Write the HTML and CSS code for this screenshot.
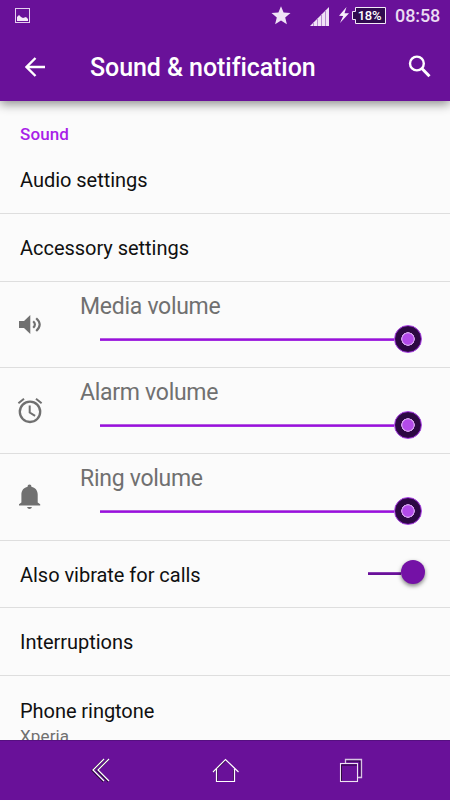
FILE: index.html
```html
<!DOCTYPE html>
<html lang="en">
<head>
<meta charset="utf-8">
<title>Sound &amp; notification</title>
<link rel="stylesheet" href="styles.css">
</head>
<body>
<div class="screen">
  <header class="top">
    <div class="status">
      <svg class="st-pic" width="15" height="15" viewBox="0 0 15 15"><rect x=".5" y=".5" width="14" height="14" fill="none" stroke="#e4d0ee"/><path d="M2 13V9l2-2 2 2 2 1 3-1 2 2v2z" fill="#f4e9f8"/></svg>
      <svg class="st-star" width="20" height="19" viewBox="0 0 20 19"><path d="M10 .2l2.6 6.3 6.9.5-5.3 4.4 1.7 6.8-5.9-3.7-5.9 3.7 1.7-6.8L.5 7l6.9-.5z" fill="#f0e3f6"/></svg>
      <svg class="st-signal" width="19" height="19" viewBox="0 0 19 19"><path d="M0 19L19 0v19z" fill="#f0e3f6"/><path d="M3.5 15v4M7.5 11v8M11.5 7v12M15.5 3v16" stroke="#b78bd0" stroke-width="1"/></svg>
      <svg class="st-bolt" width="10" height="16" viewBox="0 0 10 16"><path d="M7.5 0L0 8.7l4.2.3L1 16l9-9.7-4.5-.1z" fill="#f8effc"/></svg>
      <div class="battery"><svg width="34" height="17" viewBox="0 0 34 17"><path d="M3.5.5h30v16h-30v-4h-3v-8h3z" fill="#310b50" stroke="#f4e9f8"/></svg><span>18%</span></div>
      <span class="clock">08:58</span>
    </div>
    <div class="bar">
      <svg class="back" width="21" height="20" viewBox="0 0 21 20"><path d="M20 10H2M10.5 1L1.5 10l9 9" fill="none" stroke="#fff" stroke-width="2.4"/></svg>
      <h1>Sound &amp; notification</h1>
      <svg class="search" width="23" height="23" viewBox="0 0 23 23"><circle cx="8.9" cy="8.5" r="6.9" fill="none" stroke="#fff" stroke-width="2.4"/><path d="M13.9 13.5l7.6 7.8" stroke="#fff" stroke-width="3"/></svg>
    </div>
  </header>
  <main>
    <h2>Sound</h2>
    <div class="row audio"><span>Audio settings</span></div>
    <div class="row"><span>Accessory settings</span></div>
    <div class="volume">
      <svg class="icon" width="30" height="30" viewBox="0 0 30 30"><path d="M4 11h5l6.3-6v19L9 18H4z" fill="#707070"/><path d="M18.2 11.3q3.4 3.2 0 6.5M21.2 8.2q7 6.4 0 12.8" fill="none" stroke="#707070" stroke-width="2.2"/></svg>
      <div class="control"><label>Media volume</label><div class="slider"><i class="track"></i><i class="thumb"></i></div></div>
    </div>
    <div class="volume">
      <svg class="icon" width="30" height="30" viewBox="0 0 30 30"><circle cx="15" cy="15.8" r="10.2" fill="none" stroke="#707070" stroke-width="2.3"/><path d="M14.7 9.5v7l5.4 3.4M3.4 7.2L9 2.7M21 2.7l5.6 4.5" fill="none" stroke="#707070" stroke-width="2"/></svg>
      <div class="control"><label>Alarm volume</label><div class="slider"><i class="track"></i><i class="thumb"></i></div></div>
    </div>
    <div class="volume tall">
      <svg class="icon" width="30" height="30" viewBox="0 0 30 30"><path d="M14.5 2.4c1.2 0 1.9.9 1.9 2.3 3.8.8 6.3 3.6 6.3 7.8v8l2.5 1.7v1.4H4v-1.4l2.4-1.7v-8c0-4.2 2.5-7 6.2-7.8 0-1.4.7-2.3 1.9-2.3zM12 25h5q-.6 2-2.5 2T12 25z" fill="#707070"/></svg>
      <div class="control"><label>Ring volume</label><div class="slider"><i class="track"></i><i class="thumb"></i></div></div>
    </div>
    <div class="row toggle-row"><span>Also vibrate for calls</span><div class="toggle"><i class="rail"></i><i class="knob"></i></div></div>
    <div class="row interruptions"><span>Interruptions</span></div>
    <div class="ringtone"><p>Phone ringtone</p><small>Xperia</small></div>
  </main>
  <nav>
    <svg width="20" height="25" viewBox="0 0 20 25"><g fill="none"><path d="M12.5 1.5L1.5 12.5l11 11M17.5 1.5L6.5 12.5l11 11" stroke="#240334" stroke-width="2"/><path d="M13 1L2 12l11 11M18 1L7 12l11 11" stroke="#fff" stroke-width="1.3"/></g></svg>
    <svg class="home" width="28" height="25" viewBox="0 0 28 25"><g fill="none"><path d="M5 12v12M2 13.5L14 2M22 12v10.5" stroke="#240334" stroke-width="1.5"/><path d="M1 14L13.5 1.5 26.5 14M4.5 11v12.5h18V11" stroke="#fff" stroke-width="1.2"/></g></svg>
    <svg width="24" height="25" viewBox="0 0 24 25"><g fill="none"><path d="M2.5 23V7H18M7 3h14v15" stroke="#240334"/><path d="M6.5 6V1.5h16v18H19" stroke="#d8c5e1" stroke-width="1.3"/><rect x="1.5" y="5.5" width="17" height="18" stroke="#eee4f2" stroke-width="1.1"/></g></svg>
  </nav>
</div>
</body>
</html>
```
FILE: styles.css
```css
* { box-sizing: border-box; }
body { margin: 0; font-family: Roboto, "Liberation Sans", sans-serif; }
.screen { width: 450px; height: 800px; display: flex; flex-direction: column; overflow: hidden; background: #fbfbfb; }
.top { position: relative; z-index: 1; flex: none; height: 101px; background: #691199; box-shadow: 0 3px 10px rgba(0,0,0,.45); color: #fff; }
.status { display: flex; height: 32px; padding-left: 15px; align-items: flex-start; }
.st-pic { margin-top: 8px; }
.st-star { margin: 6px 0 0 240.5px; }
.st-signal { margin: 7px 0 0 19px; }
.st-bolt { margin: 7px 0 0 10px; }
.battery { position: relative; width: 34px; height: 17px; margin: 7px 0 0 3px; }
.battery svg { display: block; }
.battery span { position: absolute; left: 5px; top: 1px; width: 26px; font-size: 13px; line-height: 15px; letter-spacing: -.3px; text-align: center; white-space: nowrap; font-weight: 500; }
.clock { margin: 5px 0 0 9.5px; font-size: 18px; line-height: 22px; letter-spacing: -.1px; font-weight: 500; color: #eadcf2; }
.bar { display: flex; align-items: center; height: 69px; padding: 0 19px 0 25px; }
h1 { flex: 1; margin: 2px 0 0 44px; font-size: 25px; line-height: 32px; letter-spacing: -.07px; font-weight: 500; white-space: nowrap; }
.search { flex: none; }
main { flex: 1; min-height: 0; overflow: hidden; color: #101010; }
h2 { margin: 0; height: 45px; padding: 22px 20px 0; font-size: 17px; line-height: 22px; letter-spacing: .1px; font-weight: 500; color: #a91fe8; }
.row { display: flex; align-items: center; height: 68px; padding: 0 20px; border-bottom: 1px solid #dedede; font-size: 20px; line-height: 26px; letter-spacing: -.03px; }
.volume { display: flex; height: 86px; border-bottom: 1px solid #dedede; }
.tall { height: 87px; }
.icon { flex: none; margin: 28px 0 0 15px; }
.control { margin-left: 35px; width: 350px; }
label { display: block; margin-top: 10px; font-size: 23px; line-height: 30px; letter-spacing: -.28px; color: #707070; }
.slider { display: flex; align-items: center; height: 28px; margin: 3px 0 0 20px; }
.track { width: 294px; height: 3px; margin-top: 1px; background: linear-gradient(#b35be0 0 1px, #9b0fdd 1px 2px, #a22de0 2px); }
.thumb { width: 28px; height: 28px; border: 1px solid #a63ee0; border-radius: 50%; background: radial-gradient(circle, #b34ae9 0 5.2px, #d4a0ed 6px 6.5px, #2c0842 7px 11.5px, #3c095a 13px); }
.toggle-row { height: 67px; padding-top: 2px; justify-content: space-between; padding-right: 25px; }
.interruptions { padding-top: 1px; }
.toggle { display: flex; align-items: center; margin-top: -6px; }
.rail { width: 33px; height: 3px; margin-top: 2px; background: linear-gradient(#8a3eb3 0 1px, #691199 1px); }
.knob { width: 24px; height: 24px; border-radius: 50%; background: #7411a6; box-shadow: 0 2px 4px rgba(0,0,0,.5); }
.ringtone { padding: 21px 20px 0; }
p { margin: 0; font-size: 20px; line-height: 28px; letter-spacing: -.05px; }
small { display: block; font-size: 17px; line-height: 22px; letter-spacing: .15px; color: #707070; }
nav { position: relative; flex: none; height: 60px; padding: 0 87px 0 91px; display: flex; align-items: center; justify-content: space-between; background: #691199; border-top: 1px solid #551080; }
.home { margin-left: 2px; }
```
